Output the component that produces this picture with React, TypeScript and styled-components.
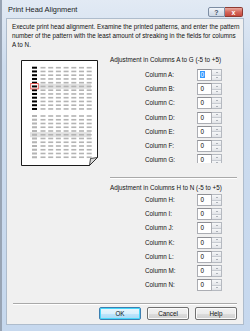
import React from 'react';
import styled, { createGlobalStyle } from 'styled-components';

const GlobalStyle = createGlobalStyle`
  html, body {
    margin: 0;
    padding: 0;
    background: #c8d8ea;
  }
  * { box-sizing: border-box; }
`;

const Window = styled.div`
  width: 250px;
  height: 331px;
  display: flex;
  flex-direction: column;
  background: linear-gradient(#e2eaf4, #cddcee 20%, #c6d8ee);
  border-left: 2px solid #98a4b4;
  font-family: "Liberation Sans", Arial, sans-serif;
  color: #111;
`;

const TitleBar = styled.div`
  height: 18px;
  display: flex;
  align-items: flex-start;
  padding-left: 6px;
  padding-right: 7px;
`;

const Title = styled.div`
  font-size: 7.4px;
  line-height: 10px;
  padding-top: 5px;
  color: #1a1a1a;
`;

const CaptionButtons = styled.div`
  margin-left: auto;
  margin-top: 7px;
  display: flex;
`;

const CaptionButton = styled.div<{ $close?: boolean }>`
  width: ${p => (p.$close ? 18 : 17)}px;
  height: 10px;
  display: flex;
  align-items: center;
  justify-content: center;
  font-size: 7px;
  font-weight: bold;
  border: 1px solid ${p => (p.$close ? '#8d3a32' : '#7d8da3')};
  border-radius: ${p => (p.$close ? '0 2px 2px 0' : '2px 0 0 2px')};
  border-left-width: ${p => (p.$close ? 0 : 1)}px;
  background: ${p =>
    p.$close
      ? 'linear-gradient(#e9a99f, #d5685c 50%, #c5473b)'
      : 'linear-gradient(#f3f6fa, #dce4ee 50%, #ccd7e4)'};
  color: ${p => (p.$close ? '#fff' : '#3f4f66')};
`;

const Body = styled.div`
  flex: 1;
  margin: 0 6px 6px 4px;
  background: #f0f0f0;
  border: 1px solid #aebccc;
  padding: 3px 6px 0 5px;
  display: flex;
  flex-direction: column;
`;

const Description = styled.div`
  font-size: 6.3px;
  line-height: 9px;
  white-space: nowrap;
`;

const Main = styled.div`
  margin-top: 6px;
  display: grid;
  grid-template-columns: 98px 1fr;
`;

const PaperColumn = styled.div`
  padding: 5px 0 0 9px;
`;

const Controls = styled.div`
  display: flex;
  flex-direction: column;
`;

const GroupHeading = styled.div<{ $gap?: number }>`
  font-size: 6.3px;
  line-height: 9px;
  white-space: nowrap;
  margin-top: ${p => p.$gap || 0}px;
`;

const Clip = styled.div`
  height: 99px;
  margin-bottom: 1px;
  overflow: hidden;
  padding-top: 5px;
`;

const Rows = styled.div<{ $gap?: number }>`
  display: flex;
  flex-direction: column;
  gap: 2.2px;
  margin-top: ${p => p.$gap || 0}px;
`;

const Row = styled.div`
  display: grid;
  grid-template-columns: 52px 25px;
  padding-left: 35px;
  height: 12px;
  align-items: center;
`;

const Label = styled.span`
  font-size: 6.3px;
  line-height: 12px;
  white-space: nowrap;
`;

const Spin = styled.div`
  display: flex;
  height: 12px;
`;

const SpinInput = styled.div`
  width: 15px;
  height: 12px;
  background: #fff;
  border: 1px solid #abadb3;
  border-top-color: #8e8f94;
  font-size: 6.3px;
  line-height: 10px;
  padding-left: 2px;
`;

const Digit = styled.span<{ $selected?: boolean }>`
  background: ${p => (p.$selected ? '#3399ff' : 'transparent')};
  color: ${p => (p.$selected ? '#fff' : '#000')};
  padding: 0 0.5px;
`;

const SpinButtons = styled.div`
  width: 10px;
  display: flex;
  flex-direction: column;
  border: 1px solid #b5b9c0;
  border-left: none;
  background: #eceef1;
`;

const SpinArrow = styled.div<{ $up?: boolean }>`
  flex: 1;
  display: flex;
  align-items: center;
  justify-content: center;
  background: linear-gradient(#f7f8f9, #e2e4e8);
  border-bottom: ${p => (p.$up ? '1px solid #c8ccd2' : 'none')};
  &::after {
    content: '';
    border-left: 1.5px solid transparent;
    border-right: 1.5px solid transparent;
    ${p => (p.$up ? 'border-bottom' : 'border-top')}: 1.5px solid #6c7480;
  }
`;

const Separator = styled.div<{ $top?: number; $left?: number }>`
  height: 2px;
  border-top: 1px solid #a9a9a9;
  border-bottom: 1px solid #ffffff;
  margin-top: ${p => p.$top || 0}px;
  margin-left: ${p => p.$left || 0}px;
`;

const Footer = styled.div`
  margin-top: auto;
  padding-bottom: 4px;
`;

const ButtonRow = styled.div`
  margin-top: 2px;
  display: flex;
  justify-content: flex-end;
  gap: 6px;
`;

const Button = styled.div<{ $default?: boolean }>`
  width: 42px;
  height: 13px;
  display: flex;
  align-items: center;
  justify-content: center;
  font-size: 6.3px;
  border-radius: 2px;
  border: 1px solid ${p => (p.$default ? '#3c7fb1' : '#707070')};
  box-shadow: ${p => (p.$default ? 'inset 0 0 0 1px #48d8fb' : 'inset 0 0 0 1px #fbfbfb')};
  background: ${p =>
    p.$default
      ? 'linear-gradient(#eaf6fd, #d9f0fc 50%, #bee6fd 51%, #a7d9f5)'
      : 'linear-gradient(#f2f2f2, #ebebeb 50%, #dddddd 51%, #cfcfcf)'};
`;

const firstCol = 11;
const grayCols = Array.from({ length: 7 }, (_, i) => 19.5 + i * 7.7);
const rowIdx = Array.from({ length: 12 }, (_, i) => i);

const PatternBlock: React.FC<{ top: number; black: boolean; hi: number }> = ({ top, black, hi }) => {
  const hiY = top + hi * 3.75;
  return (
    <g>
      <rect x={black ? 18 : 9} y={hiY - 1.6} width={black ? 52 : 61} height={5} fill="#e2e2e2" />
      {rowIdx.map(r => {
        const y = top + r * 3.75;
        return (
          <g key={r}>
            <rect x={firstCol} y={y} width={5} height={2} fill={black ? '#000' : '#b4b4b4'} />
            {grayCols.map((x, c) => (
              <rect key={c} x={x} y={y + 0.2} width={5} height={1.6} fill="#b4b4b4" />
            ))}
          </g>
        );
      })}
      {black && (
        <rect x={9.7} y={hiY - 1.9} width={7.6} height={5.4} fill="none" stroke="#e8504a" strokeWidth={0.9} />
      )}
    </g>
  );
};

const Paper: React.FC = () => (
  <svg width="77" height="106" viewBox="0 0 77 106">
    <path d="M0.5 0.5 H76.5 V97.5 L68.5 105.5 H0.5 Z" fill="#fff" stroke="#1a1a1a" strokeWidth="1" />
    <path d="M68.5 105.5 L69.5 98.5 L76.5 97.5 Z" fill="#d8d8d8" stroke="#1a1a1a" strokeWidth="0.8" />
    <PatternBlock top={6.7} black hi={5} />
    <PatternBlock top={55} black={false} hi={5} />
  </svg>
);

const SpinBox: React.FC<{ selected?: boolean }> = ({ selected }) => (
  <Spin>
    <SpinInput>
      <Digit $selected={selected}>0</Digit>
    </SpinInput>
    <SpinButtons>
      <SpinArrow $up />
      <SpinArrow />
    </SpinButtons>
  </Spin>
);

const groupOne = ['A', 'B', 'C', 'D', 'E', 'F', 'G'];
const groupTwo = ['H', 'I', 'J', 'K', 'L', 'M', 'N'];

const App: React.FC = () => (
  <>
    <GlobalStyle />
    <Window>
      <TitleBar>
        <Title>Print Head Alignment</Title>
        <CaptionButtons>
          <CaptionButton>?</CaptionButton>
          <CaptionButton $close>x</CaptionButton>
        </CaptionButtons>
      </TitleBar>
      <Body>
        <Description>
          Execute print head alignment. Examine the printed patterns, and enter the pattern
          <br />
          number of the pattern with the least amount of streaking in the fields for columns
          <br />
          A to N.
        </Description>
        <Main>
          <PaperColumn>
            <Paper />
          </PaperColumn>
          <Controls>
            <GroupHeading>Adjustment in Columns A to G (-5 to +5)</GroupHeading>
            <Clip>
              <Rows>
                {groupOne.map((c, i) => (
                  <Row key={c}>
                    <Label>Column {c}:</Label>
                    <SpinBox selected={i === 0} />
                  </Row>
                ))}
              </Rows>
            </Clip>
            <Separator $top={13} />
            <GroupHeading $gap={4}>Adjustment in Columns H to N (-5 to +5)</GroupHeading>
            <Rows $gap={2}>
              {groupTwo.map(c => (
                <Row key={c}>
                  <Label>Column {c}:</Label>
                  <SpinBox />
                </Row>
              ))}
            </Rows>
          </Controls>
        </Main>
        <Footer>
          <Separator $left={1} />
          <ButtonRow>
            <Button $default>OK</Button>
            <Button>Cancel</Button>
            <Button>Help</Button>
          </ButtonRow>
        </Footer>
      </Body>
    </Window>
  </>
);

export default App;
